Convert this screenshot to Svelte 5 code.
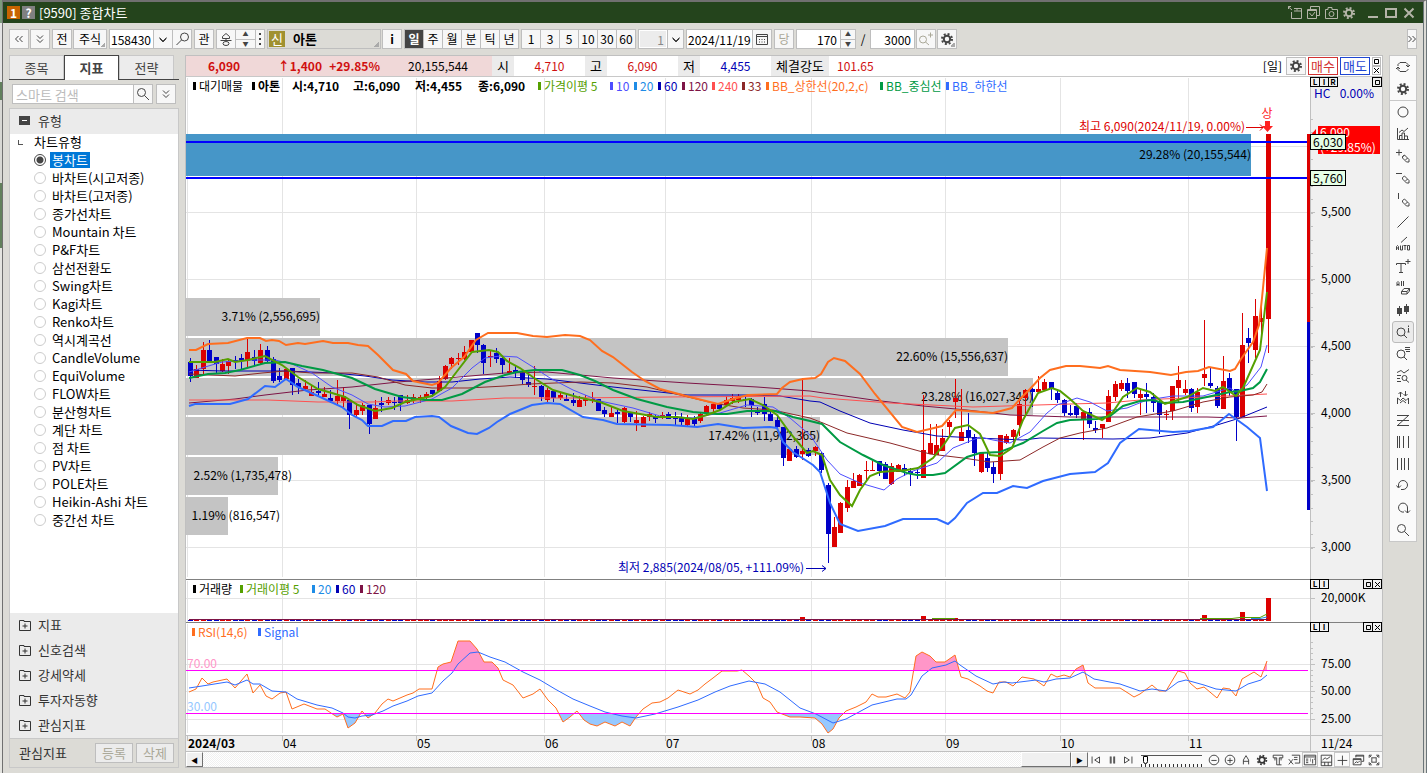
<script>
    let chartType = $state("봉차트");
    let period = $state("일");
    let keyword = $state("");
    let zoom = $state(4);

    const chartTypes = [
        "봉차트", "바차트(시고저종)", "바차트(고저종)", "종가선차트", "Mountain 차트",
        "P&F차트", "삼선전환도", "Swing차트", "Kagi차트", "Renko차트", "역시계곡선",
        "CandleVolume", "EquiVolume", "FLOW차트", "분산형차트", "계단 차트", "점 차트",
        "PV차트", "POLE차트", "Heikin-Ashi 차트", "중간선 차트",
    ];
    const groups = ["지표", "신호검색", "강세약세", "투자자동향", "관심지표"];
    const periods = ["일", "주", "월", "분", "틱", "년"];
    const minutes = [1, 3, 5, 10, 30, 60];

    // stroke paths on a 16x16 grid
    const icons = {
        search: "M2.5 6.5a4 4 0 1 0 8 0a4 4 0 1 0 -8 0M9.5 9.5L14 14",
        searchLeft: "M6.500 6a4 4 0 1 0 8 0a4 4 0 1 0 -8 0M7.5 9L2.500 14",
        down: "M4.500 6.500L8 10L11.500 6.500M4.500 7.500L8 11L11.500 7.500",
        dleft: "M7.500 5L4.500 8L7.500 11M11.500 5L8.500 8L11.500 11",
        dright: "M4.500 5L7.500 8L4.500 11M8.500 5L11.500 8L8.500 11",
        ddown: "M5 4.500L8 7.500L11 4.500M5 8.500L8 11.500L11 8.500",
        order: "M8 2.500L11.500 5.500V7.500H4.500V5.500ZM2.500 9.500H13.500M5 12.500a3 2 0 1 0 6 0a3 2 0 1 0 -6 0M8 7.500V9.500",
        dots: "M7.500 2V4M8.500 2V4M7.500 7V9M8.500 7V9M7.500 12V14M8.500 12V14",
        calendar: "M2.500 3.500H13.500V13.500H2.500ZM2.500 5.500H13.500M5 8.500H6M7.500 8.500H8.500M10 8.500H11M5 11H6M7.500 11H8.500M10 11H11",
        zoomPlus: "M1.500 8.500a3.500 3.500 0 1 0 7 0a3.500 3.500 0 1 0 -7 0M7.500 11L11 14M12.500 1.500V6.500M10 4H15",
        cycle: "M3 7V5.500L5 3.500H11L13 5.500V7.500M11 6L13 8L15 6M13 10V10.500L11 12.500H5L3 10.500V9M1 10L3 8L5 10",
        circle: "M3 8a5 5 0 1 0 10 0a5 5 0 1 0 -10 0",
        chart: "M2.500 2V13.500H14M4.500 13V9.500H7V7H9.500V10H12.500V13M7 9.500V13M9.500 10V13M4 6.500L7 4L9 5.500L13 2",
        plusPen: "M1 4.500H7M4 1.500V7.500M7.500 8.500L9.500 7L14 11.500V14H11.500L7.500 10ZM9.500 7L7.500 9M12.500 10L10.500 12",
        minusPen: "M1 3.500H7M7.500 7.500L9.500 6L14 10.500V13H11.500L7.500 9ZM12.500 9L10.500 11",
        barPen: "M3.500 1V7M7.500 8.500L9.500 7L14 11.500V14H11.500L7.500 10ZM12.500 10L10.500 12",
        line: "M2.500 13.500L13.500 2.500",
        auto: "M6 6.500L12 1M1.500 14V10.500L2.500 9.500L3.500 10.500V14M1.500 12H3.500M5.500 9.500V14H7.500V9.500M8.500 9.500H11.500M10 9.500V14M12.500 9.500H14.500V14H12.500Z",
        text: "M1.500 7V5.500H10.500V7M6 5.500V14M4 14.500H8M13 1V6M10.500 3.500H15.500",
        eraser: "M2 6V2.500L3 1.500L4 2.500V6M2 4.500H4M6.500 1V6M8.500 1V6M6.500 11.500L9 8.500H14.500V11L12 14H6.500ZM6.500 11.500H12L14.500 8.500M12 11.500V14",
        searchInfo: "M2 8a4 4 0 1 0 8 0a4 4 0 1 0 -8 0M9 11L12 14M13.500 1.500V3M13.500 4V8M12.500 8H14.500",
        searchList: "M2 8a4 4 0 1 0 8 0a4 4 0 1 0 -8 0M9 11L12 14M10 1.500H15M10 3.500H15M11 5.500H15",
        waves: "M2 4.500L6 2.500L9 5L14 1.500M2 7.500H6M2 10.500H5M2 13.500H6M7 10a2.500 2.500 0 1 0 5 0a2.500 2.500 0 1 0 -5 0M11 12L14 14.500",
        updown: "M5.500 7V2M3.500 4L5.500 2L7.500 4M10.500 1V6M8.500 4L10.500 6L12.500 4M2.500 14V8L5.500 10.500L8 8L11 10.500L13.500 8V14M5 13L8 10.500L11 13",
        zigzag: "M2 3.500H14M2 8.500H14M2 13.500H14M13.500 3.500L2.500 13.500",
        bars: "M2.500 2V14M4.500 2V14M8.500 2V14M13.500 2V14",
        bars2: "M2.500 2V14M6.500 2V14M9.500 2V14M13.500 2V14",
        undo: "M3.500 9V7a4.500 4.500 0 1 1 4.500 4.500H6M1.500 7.500L3.500 10L6 7.500",
        redo: "M9 12a4.500 4.500 0 1 1 3.500 -4V13M10 10.500L12.500 13L15 10.500",
        first: "M3.500 4V12M12 4.500L6.500 8L12 11.500Z",
        pause: "M6 4V12M10 4V12M7 4V12M11 4V12",
        last: "M12.500 4V12M4 4.500L9.500 8L4 11.500Z",
        zoomOut: "M2.500 8a5.500 5.500 0 1 0 11 0a5.500 5.500 0 1 0 -11 0M5 8.500H11",
        zoomIn: "M2.500 8a5.500 5.500 0 1 0 11 0a5.500 5.500 0 1 0 -11 0M5 8.500H11M8 5.500V11.500",
        letter: "M5 13V8L8 3L11 8V13M5 9.500H11",
        tools: "M2.500 2.500H13.500V5.500H9.500V13.500H6.500V5.500H2.500ZM4.500 5.500V8.500M11.500 5.500V8.500M9.500 13.500H12",
        excel: "M5.500 2.500H14.500V11.500H9M8 5H12M8 7.500H12M2 7L7 13M7 7L2 13",
        table: "M1.500 2.500H14.500V13.500H1.500ZM1.500 4.500H14.500M3.500 7H6M3.500 9H6M3.500 11H6M8 7H9M8 9H9M11 7V12M12.500 7H14",
        frame: "M2.500 2.500H14.500V14.500H2.500ZM2.500 10.500H14.500M6.500 10.500V14.500M10.500 10.500V14.500M4 8L7 5.500L9 7L13 4",
        cross: "M3 8.500H14M8.500 3V14",
        windows: "M5.500 5V2.500H14.500V9.500H12M5.500 3.500H14.500M2.500 6.500H11.500V13.500H2.500ZM2.500 7.500H11.500M4 12L6 10L8 11L10 9",
        expand: "M2.500 5.500V2.500H5.500M10.500 2.500H13.500V5.500M13.500 10.500V13.500H10.500M5.500 13.500H2.500V10.500M5.500 5.500H10.500V10.500H5.500ZM3 3L5 5M13 3L11 5M3 13L5 11M13 13L11 11",
        dock: "M1 1.500L5 5M1.500 4V1.500H4M7 3.500H14.500V13.500H4.500V7M10 3.500V5.500M7 6H14",
        copies: "M5.500 4V1.500H14.500V10.500H12M2.500 4.500H11.500V13.500H2.500ZM4.500 8L7 11L10 7M2.500 5.500H11.500",
        camera: "M2.500 4.500H5V2.500H9V4.500H14.500V13.500H2.500ZM6 9a2.500 2.500 0 1 0 5 0a2.500 2.500 0 1 0 -5 0",
        folder: "M2.500 3.500H7V4.500H13.500V13.500H2.500ZM5.500 9H10.500M8 6.500V11.500",
    };
    const drawTools = [
        "circle", "chart", "plusPen", "minusPen", "barPen", "line", "auto", "text", "eraser",
        "candles", "searchInfo", "searchList", "waves", "updown", "zigzag", "bars", "bars2",
        "undo", "redo", "search",
    ];
    const footTools = ["zoomOut", "zoomIn", "letter", "gear", "tools", "excel", "table", "frame", "cross", "windows", "expand"];

    // side, high, body top, body bottom, low
    const candles = `
B358,362,376,382 R365,369,378,378 R342,350,369,375 B340,350,362,362 B357,357,364,373 R359,364,371,372 R360,361,366,374
B356,360,361,369 B354,358,361,369 R338,352,361,368 B350,357,361,366 R344,350,363,365 B346,350,361,363 B357,359,381,383
B368,376,380,382 R368,369,379,380 B368,368,385,395 B379,383,387,394 R380,386,389,390 R385,392,396,396 B382,391,393,397
R387,394,397,397 B390,398,401,403 R380,396,401,405 R387,396,401,407 B400,400,415,429 R403,410,415,418 R403,405,411,415
B405,405,424,434 R400,408,419,419 B397,403,405,412 R397,400,403,405 B397,402,403,410 B395,395,403,411 R395,400,403,404
R394,397,400,403 R395,397,399,403 R392,394,397,399 B390,390,394,397 R376,381,391,392 R365,366,379,380 R357,358,364,369
R353,358,359,365 R346,352,359,360 R340,340,352,353 B333,333,345,353 B344,345,363,374 R351,356,357,367 B348,353,359,363
B357,358,365,374 R358,371,373,373 B366,370,373,378 B369,373,380,384 B375,382,385,387 R366,386,387,395 B385,386,397,401
R388,390,400,402 B390,391,398,402 R393,395,398,400 B393,399,401,401 B393,400,403,406 R396,400,407,407 R395,399,401,406
R392,399,401,403 B399,399,411,411 B407,410,414,417 R407,413,417,417 B410,412,414,423 R407,408,422,423 B412,413,417,422
R411,420,423,431 R416,417,427,427 R412,414,417,421 B415,416,419,423 R412,415,417,419 B412,414,419,419 B412,416,419,425
B413,417,422,426 R415,418,425,426 B416,419,424,426 R413,414,421,423 R405,406,414,415 R403,404,409,412 B403,404,409,411
R396,400,405,407 R394,398,401,404 R394,398,400,403 B396,399,400,407 B398,399,405,417 B407,411,413,415 B397,404,414,421
B412,414,421,421 B415,420,427,428 B427,427,458,466 R448,449,461,461 B446,449,457,458 R378,451,454,460 B448,450,456,457
R446,447,451,456 B452,453,470,473 B483,485,534,563 R517,527,547,547 R502,503,533,533 R480,487,508,512 R473,481,488,488
R474,475,486,486 R461,470,471,482 R461,470,471,471 B461,461,471,476 B462,464,479,479 R463,466,484,485 R464,465,472,472
B464,468,470,476 B468,471,473,486 B469,472,473,479 R395,450,478,478 R424,443,454,454 R424,445,455,455 R429,438,451,451
R420,422,427,436 R379,398,402,418 R389,432,441,441 B413,430,437,443 B434,437,453,466 R452,453,472,473 B453,458,468,472
B462,467,474,483 R435,435,474,480 R434,436,443,444 R429,430,437,443 R401,404,425,436 R389,390,398,414 B388,389,392,407
R376,389,392,394 R379,382,390,391 B382,382,388,400 B391,393,400,403 B399,400,413,416 B405,413,415,416 B403,406,415,418
R411,412,420,440 B408,412,424,428 B421,428,430,433 R424,424,428,438 R390,396,422,422 R381,384,397,401 R380,383,389,391
B378,383,391,398 B382,382,394,398 R390,394,398,415 B383,394,397,413 B393,397,403,412 B400,402,415,434 R410,414,415,420
R386,386,411,420 R366,380,388,403 R380,389,393,395 B388,389,408,412 R388,392,407,413 R320,374,378,386 B368,383,386,388
B386,388,406,408 R356,381,409,409 B373,378,391,396 B389,389,417,441 R313,345,417,417 B328,338,343,363 R299,316,350,358
R307,318,322,335 R134,134,319,353`
        .trim()
        .split(/\s+/)
        .map((row, i) => {
            const [high, top, bottom, low] = row.slice(1).split(",").map(Number);
            return { x: Math.round(190 + i * 6.376), up: row[0] === "R", high, top, bottom, low };
        });

    const averages = [
        { color: "#0000b4", points: "189,370 222,371 285,371 335,373 365,376 392,380 425,382 452,382 480,379 510,377 547,379 580,383 613,387 650,391 687,395 747,395 780,396 810,401 820,402 840,411 870,423 903,430 937,436 977,438 1023,440 1040,438 1113,439 1150,438 1187,433 1217,425 1240,418 1267,407" },
        { color: "#7d1446", points: "189,403 235,399 265,395 308,390 352,387 398,382 435,379 505,373 547,372 613,378 687,383 757,387 810,391 873,400 923,406 967,410 1010,415 1070,417 1107,417 1207,417 1240,418 1267,416" },
        { color: "#ff5050", points: "189,400 268,400 318,402 372,402 398,401 452,401 505,398 573,398 667,397 810,396 823,398 890,403 973,407 1070,404 1107,403 1140,400 1207,397 1267,394" },
        { color: "#8c2828", points: "189,374 235,376 262,373 285,371 312,373 352,373 378,377 405,385 432,388 468,388 505,386 530,384 580,382 613,383 647,387 680,395 713,403 743,408 773,410 810,418 823,423 847,433 890,443 930,454 963,458 990,462 1020,460 1043,447 1060,438 1080,433 1107,428 1137,417 1173,411 1203,402 1230,397 1253,395 1262,392 1267,384" },
        { color: "#4d4dff", points: "189,372 205,367 222,362 252,360 275,360 292,364 312,373 332,387 352,395 368,404 385,407 405,406 432,399 452,388 472,368 485,358 500,356 517,357 533,367 550,378 573,390 600,401 633,408 660,416 693,418 720,413 747,405 773,407 790,418 810,435 827,460 840,474 860,483 884,490 897,479 913,471 937,463 953,448 980,437 993,440 1010,443 1030,432 1047,413 1057,405 1077,398 1090,402 1107,411 1127,408 1147,400 1173,396 1203,396 1230,388 1236,392 1247,385 1261,367 1267,345" },
        { color: "#ff6e1e", wide: true, points: "189,350 196,350 208,344 228,343 247,338 260,338 266,341 272,340 279,341 286,345 298,343 305,344 323,341 333,343 348,343 358,345 368,346 378,355 393,370 406,374 413,381 432,385 438,383 451,368 464,357 476,340 488,333 517,333 533,336 547,337 565,335 580,336 590,340 602,351 613,357 632,372 645,381 660,389 690,397 718,404 733,399 748,395 777,394 782,388 790,382 803,379 815,378 821,374 828,362 834,358 845,361 860,374 875,394 902,427 917,432 930,429 942,426 950,417 956,410 993,413 1012,408 1020,399 1030,389 1040,378 1050,370 1066,366 1080,366 1100,368 1108,366 1120,370 1150,372 1171,375 1186,372 1198,371 1209,367 1230,371 1235,369 1241,359 1253,342 1259,325 1262,298 1267,248" },
        { color: "#2f6bff", wide: true, points: "189,406 195,404 230,404 248,399 265,386 275,387 286,379 298,387 318,396 342,407 352,415 362,420 368,426 382,426 393,421 406,421 415,417 432,416 439,417 451,426 468,433 477,434 489,428 497,422 510,414 532,405 547,403 560,404 583,417 603,420 617,424 670,425 697,427 718,424 743,428 770,427 777,428 783,442 793,452 813,465 820,472 830,503 840,524 858,531 885,526 903,519 937,519 948,524 955,518 967,503 983,493 997,493 1013,486 1027,488 1043,481 1070,474 1095,472 1108,463 1120,443 1139,429 1173,432 1190,431 1213,427 1229,414 1247,427 1260,438 1267,491" },
        { color: "#009a44", wide: true, points: "189,378 208,374 225,373 240,370 265,363 285,362 302,366 323,370 352,378 375,389 402,397 425,400 442,400 462,394 485,382 505,375 517,372 535,370 562,370 580,375 595,381 613,390 637,399 667,407 693,412 717,414 727,414 747,411 775,411 793,417 810,421 822,424 840,442 863,455 883,465 907,473 917,475 933,475 945,473 967,457 980,453 1000,452 1023,443 1043,431 1057,423 1070,420 1097,419 1110,416 1123,406 1140,401 1153,400 1163,403 1183,402 1207,397 1230,392 1240,391 1253,388 1260,382 1267,369" },
        { color: "#55a000", wide: true, points: "189,362 215,362 228,359 235,362 248,360 265,356 282,365 298,377 318,389 332,393 345,397 358,405 375,411 392,408 405,402 432,396 445,387 458,370 472,352 489,350 498,352 507,361 520,368 537,380 553,390 577,397 600,402 623,411 640,414 657,417 677,417 693,419 707,415 720,410 733,402 750,399 763,405 777,415 790,433 807,453 813,451 822,455 830,480 840,495 852,506 860,490 870,476 880,472 907,470 918,468 933,458 945,443 955,428 968,425 980,434 990,455 1000,456 1012,448 1023,420 1038,393 1052,388 1060,391 1070,399 1083,411 1102,420 1113,412 1123,397 1137,388 1150,392 1165,404 1187,397 1203,388 1215,391 1223,387 1236,396 1243,388 1260,350 1267,292" },
    ];

    const rsi = "189,692 196,689 202,678 208,684 213,682 227,679 235,688 247,674 253,693 260,685 266,696 272,699 280,693 286,692 292,709 304,704 317,709 325,709 337,717 343,714 348,728 355,723 362,711 368,718 375,713 382,704 388,699 393,701 407,695 413,693 419,689 432,689 438,667 443,664 451,662 458,641 470,641 477,649 484,662 492,662 498,668 503,680 513,685 523,698 533,694 540,689 548,700 556,708 563,722 570,717 577,711 584,720 590,724 597,726 605,722 615,726 622,722 630,726 636,717 643,709 652,703 660,702 668,698 678,690 690,694 698,690 705,684 713,678 722,671 737,671 742,670 749,676 757,684 763,698 770,702 777,712 790,717 800,717 815,718 822,724 828,733 833,729 839,718 846,711 856,707 866,702 872,694 878,697 886,697 897,694 905,698 910,692 916,656 922,652 930,656 936,662 945,662 955,655 961,677 968,679 980,686 987,691 993,693 999,682 1006,682 1013,686 1022,677 1034,679 1044,686 1051,674 1057,677 1064,675 1070,677 1076,669 1083,665 1088,683 1095,688 1120,688 1128,693 1134,697 1140,694 1152,685 1159,691 1166,691 1178,671 1185,673 1190,683 1197,689 1204,687 1217,698 1223,688 1230,689 1236,696 1242,679 1254,672 1261,677 1267,661";
    const signal = "189,688 202,686 227,682 235,685 247,680 253,684 260,684 272,691 286,692 297,699 317,705 332,708 343,713 348,717 355,718 362,716 372,715 383,711 393,706 407,701 418,696 432,693 443,681 452,673 458,664 470,653 478,652 490,657 505,662 523,672 540,680 555,689 573,699 590,706 605,712 622,716 636,718 655,714 678,707 698,700 715,692 730,686 749,681 765,684 780,692 800,708 816,714 833,723 846,719 872,705 897,699 906,699 911,695 922,676 932,668 946,665 955,661 960,665 976,676 993,684 1004,682 1012,683 1036,680 1044,682 1056,679 1070,678 1083,672 1094,679 1120,684 1140,691 1152,689 1166,691 1178,682 1186,680 1204,685 1216,689 1236,691 1248,684 1261,680 1267,675";

    const months = [
        [187, "2024/03"], [282, "04"], [416, "05"], [544, "06"], [665, "07"],
        [811, "08"], [945, "09"], [1060, "10"], [1188, "11"],
    ];
    const prices = [[146, ""], [212, "5,500"], [279, "5,000"], [346, "4,500"], [413, "4,000"], [480, "3,500"], [547, "3,000"]];
    const priceTicks = Array.from({ length: 33 }, (_, i) => Math.round(119 + i * 13.4));
    const profile = [
        [298, 38, 320, "3.71% (2,556,695)", 320],
        [338, 38, 1008, "22.60% (15,556,637)", 1008],
        [378, 37, 1033, "23.28% (16,027,345)", 1033],
        [417, 38, 820, "17.42% (11,992,365)", 820],
        [457, 38, 278, "2.52% (1,735,478)", 292],
        [497, 38, 228, "1.19% (816,547)", 280],
    ];
    const priceLegend = [
        [193, "대기매물", "#000"], [252, "아톤", "#000", true], [538, "가격이평 5", "#55a000"],
        [610, "10", "#4d4dff"], [634, "20", "#1e8ce6"], [658, "60", "#0000b4"], [682, "120", "#7d1446"],
        [712, "240", "#ff5050"], [742, "33", "#8c2828"], [766, "BB_상한선(20,2,c)", "#ff6e1e"],
        [880, "BB_중심선", "#009a44"], [946, "BB_하한선", "#2f6bff"],
    ];
    const ohlc = [[292, "시:4,710"], [353, "고:6,090"], [415, "저:4,455"], [478, "종:6,090"]];
    const volumeLegend = [
        [193, "거래량", "#000"], [240, "거래이평 5", "#55a000"], [312, "20", "#1e8ce6"],
        [336, "60", "#0000b4"], [360, "120", "#7d1446"],
    ];
    const rsiLegend = [[192, "RSI(14,6)", "#ff6e1e"], [258, "Signal", "#2f6bff"]];
    const bigVolumes = { 96: 4, 115: 5, 120: 3, 159: 6, 165: 9, 169: 23 };
</script>

{#snippet icon(name)}
    <svg class="icon" viewBox="0 0 16 16" aria-hidden="true">
        {#if name === "gear"}
            <circle cx="8" cy="8" r="3.200" stroke-width="2" />
            <circle cx="8" cy="8" r="5" stroke-width="2" stroke-dasharray="1.964 1.963" />
        {:else if name === "candles"}
            <path d="M4.500 4V14M11.500 2V12" />
            <path class="solid" d="M2 6H7V12H2ZM9 4H14V10H9Z" />
        {:else}
            <path d={icons[name]} />
        {/if}
    </svg>
{/snippet}

{#snippet boxMark()}
    <svg class="mini" viewBox="0 0 7 7" aria-hidden="true"><path d="M1.500 1.500H5.500V5.500H1.500Z" /></svg>
{/snippet}

{#snippet crossMark()}
    <svg class="mini" viewBox="0 0 7 7" aria-hidden="true"><path d="M1 1L6 6M6 1L1 6" /></svg>
{/snippet}

{#snippet legend(items, y)}
    {#each items as [x, label, color, bold]}
        <rect {x} y={y - 9} width="3" height="8" fill={color} />
        <text class:bold x={x + 6} {y} fill={color}>{label}</text>
    {/each}
{/snippet}

{#snippet monthLines(top, height)}
    {#each months as [x]}
        <rect {x} y={top} width="1" {height} fill="#e4e4e4" />
    {/each}
{/snippet}

<div class="window">
    <header class="titlebar">
        <span class="badge one">1</span>
        <span class="badge help">?</span>
        <h1>[9590] 종합차트</h1>
        <div class="windowTools">
            {#each ["dock", "copies", "camera", "gear"] as name}
                <button aria-label={name}>{@render icon(name)}</button>
            {/each}
            <button class="min" aria-label="최소화"><i></i></button>
            <button class="max" aria-label="최대화"><i></i></button>
            <button class="close" aria-label="닫기">
                <svg viewBox="0 0 12 12"><path d="M1.500 1.500L10.500 10.500M10.500 1.500L1.500 10.500" /></svg>
            </button>
        </div>
    </header>

    <div class="toolbar">
        <div class="set">
            <button class="btn" aria-label="이전">{@render icon("dleft")}</button>
            <button class="btn" aria-label="펼치기">{@render icon("ddown")}</button>
        </div>
        <div class="set">
            <button class="btn">전</button>
            <button class="btn stock corner">주식</button>
        </div>
        <div class="joined">
            <input class="field code" value="158430" aria-label="종목코드" />
            <button class="btn" aria-label="최근 종목">{@render icon("down")}</button>
            <button class="btn" aria-label="종목 찾기">{@render icon("searchLeft")}</button>
        </div>
        <button class="btn">관</button>
        <div class="joined">
            <button class="btn" aria-label="순서">{@render icon("order")}</button>
            <span class="spin wide"><button aria-label="위">▲</button><button aria-label="아래">▼</button></span>
            <button class="btn slim" aria-label="더보기">{@render icon("dots")}</button>
        </div>
        <div class="set">
            <div class="name corner"><span>신</span><b>아톤</b></div>
            <button class="btn bold">i</button>
        </div>
        <div class="joined periods">
            {#each periods as p}
                <button class="btn" class:on={period === p} onclick={() => (period = p)}>{p}</button>
            {/each}
        </div>
        <div class="joined">
            {#each minutes as m}
                <button class="btn">{m}</button>
            {/each}
        </div>
        <div class="joined">
            <input class="field unit" value="1" aria-label="단위" disabled />
            <button class="btn unitDown" aria-label="단위 선택">{@render icon("down")}</button>
        </div>
        <div class="joined">
            <input class="field date" value="2024/11/19" aria-label="날짜" />
            <button class="btn" aria-label="달력">{@render icon("calendar")}</button>
        </div>
        <button class="btn dim">당</button>
        <div class="joined">
            <input class="field count" value="170" aria-label="조회 개수" />
            <span class="spin"><button aria-label="늘리기">▲</button><button aria-label="줄이기">▼</button></span>
        </div>
        <span class="slash">/</span>
        <div class="set">
            <input class="field count" value="3000" aria-label="전체 개수" />
            <button class="btn dim" aria-label="확대">{@render icon("zoomPlus")}</button>
            <button class="btn corner" aria-label="설정">{@render icon("gear")}</button>
        </div>
        <button class="btn slim more" aria-label="더보기">{@render icon("dright")}</button>
    </div>

    <main>
        <aside>
            <nav>
                <button>종목</button>
                <button class="active">지표</button>
                <button>전략</button>
            </nav>
            <div class="searchRow">
                <div class="joined">
                    <input class="field" placeholder="스마트 검색" aria-label="스마트 검색" bind:value={keyword} />
                    <button class="btn" aria-label="검색">{@render icon("search")}</button>
                </div>
                <button class="btn" aria-label="검색 옵션">{@render icon("ddown")}</button>
            </div>
            <section class="panel">
                <button class="group open"><i class="folder"></i>유형</button>
                <fieldset>
                    <legend><i class="elbow"></i>차트유형</legend>
                    {#each chartTypes as type}
                        <label>
                            <input type="radio" name="chartType" value={type} bind:group={chartType} />
                            <span>{type}</span>
                        </label>
                    {/each}
                </fieldset>
                <div class="groups">
                    {#each groups as group}
                        <button class="group">{@render icon("folder")}{group}</button>
                    {/each}
                </div>
                <footer>
                    <span>관심지표</span>
                    <button class="btn dim">등록</button>
                    <button class="btn dim">삭제</button>
                </footer>
            </section>
        </aside>

        <article>
            <div class="quote">
                <div class="pink">
                    <b class="last">6,090</b>
                    <b class="diff">↑1,400</b>
                    <b class="rate">+29.85%</b>
                    <span class="volume">20,155,544</span>
                </div>
                <span class="tag">시</span><span class="value up">4,710</span>
                <span class="tag">고</span><span class="value up">6,090</span>
                <span class="tag">저</span><span class="value down">4,455</span>
                <span class="tag strength">체결강도</span><span class="value up left">101.65</span>
                <div class="orders">
                    <span>[일]</span>
                    <button class="btn" aria-label="차트 설정">{@render icon("gear")}</button>
                    <button class="trade buy">매수</button>
                    <button class="trade sell">매도</button>
                    <div class="tiny">
                        <button aria-label="확장">{@render boxMark()}</button>
                        <button aria-label="닫기">{@render crossMark()}</button>
                    </div>
                </div>
            </div>

            <div class="pane">
                <svg viewBox="186 77 1196 502" role="img" aria-label="가격 차트">
                    {#each prices as [y]}
                        <rect x="186" {y} width="1124" height="1" fill="#e4e4e4" />
                    {/each}
                    {@render monthLines(78, 499)}
                    <rect x="186" y="134" width="1065" height="42" fill="#4696c8" />
                    {#each profile as [y, height, right]}
                        <rect x="186" {y} width={right - 186} {height} fill="#c4c4c4" />
                    {/each}
                    {#each profile as [y, , , label, end]}
                        <text x={end} y={y + 23} text-anchor="end">{label}</text>
                    {/each}
                    <text x="1251" y="159" text-anchor="end">29.28% (20,155,544)</text>
                    {#each candles as c, i}
                        <rect x={c.x} y={c.high} width="1" height={c.low - c.high} fill={c.up ? "#dc0000" : "#0000c8"} />
                        <rect x={c.x - 2} y={c.top} width="5" height={c.bottom - c.top} fill={c.up ? "#dc0000" : "#0000c8"} />
                    {/each}
                    {#each averages as line}
                        <polyline class:wide={line.wide} stroke={line.color} points={line.points} />
                    {/each}
                    <rect x="186" y="141" width="1124" height="2" fill="#00f" />
                    <rect x="186" y="177" width="1124" height="2" fill="#00f" />
                    {@render legend(priceLegend, 91)}
                    {#each ohlc as [x, label]}
                        <text class="bold" {x} y="91">{label}</text>
                    {/each}
                    <text x="1245" y="131" text-anchor="end" fill="#dc0000">최고 6,090(2024/11/19, 0.00%)</text>
                    <path class="mark up" d="M1246 127.500H1263M1260 124.500L1263 127.500L1260 130.500" />
                    <text x="1267" y="118" text-anchor="middle" fill="#f22">상</text>
                    <path fill="#f22" d="M1265 121H1270V126H1273L1267.500 132L1262 126H1265Z" />
                    <text x="804" y="572" text-anchor="end" fill="#0000b4">최저 2,885(2024/08/05, +111.09%)</text>
                    <path class="mark down" d="M806 568.500H826M822 565.500L826 568.500L822 571.500" />

                    <rect x="1310" y="77" width="72" height="502" fill="#f0f0f0" />
                    <rect x="1310" y="77" width="1" height="502" fill="#c0c0c0" />
                    <rect x="1307" y="134" width="3" height="188" fill="#dc0000" />
                    <rect x="1307" y="322" width="3" height="188" fill="#0000c8" />
                    {#each priceTicks as y}
                        <rect x="1311" {y} width="2" height="1" fill="#c0c0c0" />
                    {/each}
                    {#each prices as [y, label]}
                        <rect x="1311" {y} width="4" height="1" fill="#c0c0c0" />
                        <text x="1321" y={y + 4}>{label}</text>
                    {/each}
                    <text x="1314" y="98" fill="#0000b4">HC</text>
                    <text x="1374" y="98" text-anchor="end" fill="#0000b4">0.00%</text>
                    <path fill="red" d="M1318 126H1380V154H1318ZM1316 129V136H1310Z" />
                    <text x="1320" y="137" fill="#fff">6,090</text>
                    <text x="1320" y="152" fill="#fff">(+29.85%)</text>
                    <rect class="level" x="1310.500" y="134.500" width="35" height="15" />
                    <text x="1313" y="147">6,030</text>
                    <rect class="level" x="1310.500" y="170.500" width="35" height="15" />
                    <text x="1313" y="183">5,760</text>
                </svg>
                <div class="scale">
                    <button>L</button><button>I</button><button>R</button>
                    <button class="end" aria-label="확장">{@render boxMark()}</button>
                </div>
            </div>

            <div class="pane">
                <svg viewBox="186 579 1196 43" role="img" aria-label="거래량">
                    <rect x="186" y="598" width="1124" height="1" fill="#e4e4e4" />
                    {@render monthLines(581, 41)}
                    {#each candles as c, i}
                        {@const h = bigVolumes[i] ?? 1}
                        <rect x={c.x - 2} y={621 - h} width="5" height={h} fill={c.up ? "#dc0000" : "#0000c8"} />
                    {/each}
                    <polyline stroke="#7d1446" points="189,619.500 1268,619.500" />
                    <polyline stroke="#1e8ce6" points="1251,618.500 1260,618.500 1267,617" />
                    <polyline stroke="#55a000" points="932,618.500 955,618.500" />
                    <polyline stroke="#55a000" points="1200,618.500 1232,618.500 1240,617.500 1260,617.500 1267,614" />
                    {@render legend(volumeLegend, 594)}
                    <rect x="1310" y="579" width="72" height="43" fill="#f0f0f0" />
                    <rect x="1310" y="579" width="1" height="43" fill="#c0c0c0" />
                    <rect x="1311" y="598" width="4" height="1" fill="#c0c0c0" />
                    <text x="1321" y="602">20,000K</text>
                    <rect x="186" y="579" width="1196" height="1" fill="#808080" />
                </svg>
                <div class="scale">
                    <button>L</button><button>I</button>
                    <button class="end" aria-label="확장">{@render boxMark()}</button>
                    <button aria-label="닫기">{@render crossMark()}</button>
                </div>
            </div>

            <div class="pane">
                <svg viewBox="186 622 1196 113" role="img" aria-label="RSI">
                    <defs>
                        <clipPath id="over"><rect x="186" y="622" width="1124" height="48" /></clipPath>
                        <clipPath id="under"><rect x="186" y="714" width="1124" height="21" /></clipPath>
                    </defs>
                    {#each [664, 691, 719] as y}
                        <rect x="186" {y} width="1124" height="1" fill="#e4e4e4" />
                    {/each}
                    {@render monthLines(624, 109)}
                    <polygon fill="#ff96c8" clip-path="url(#over)" points="189,735 {rsi} 1267,735" />
                    <polygon fill="#96c8ff" clip-path="url(#under)" points="189,640 {rsi} 1267,640" />
                    <polyline stroke="#ff6e1e" points={rsi} />
                    <polyline stroke="#2f6bff" points={signal} />
                    <text x="187" y="668" fill="#ff96c8">70.00</text>
                    <text x="187" y="711" fill="#96c8ff">30.00</text>
                    <rect x="186" y="670" width="1122" height="1" fill="#f0f" />
                    <rect x="186" y="713" width="1122" height="1" fill="#f0f" />
                    {@render legend(rsiLegend, 637)}
                    <rect x="1310" y="622" width="72" height="113" fill="#f0f0f0" />
                    <rect x="1310" y="622" width="1" height="113" fill="#c0c0c0" />
                    {#each [642, 648, 653, 659, 670, 675, 681, 686, 697, 702, 708, 713] as y}
                        <rect x="1311" {y} width="2" height="1" fill="#c0c0c0" />
                    {/each}
                    {#each [[664, "75.00"], [691, "50.00"], [719, "25.00"]] as [y, label]}
                        <rect x="1311" {y} width="4" height="1" fill="#c0c0c0" />
                        <text x="1321" y={y + 4}>{label}</text>
                    {/each}
                    <rect x="186" y="622" width="1196" height="1" fill="#808080" />
                </svg>
                <div class="scale">
                    <button>L</button><button>I</button>
                    <button class="end" aria-label="확장">{@render boxMark()}</button>
                    <button aria-label="닫기">{@render crossMark()}</button>
                </div>
            </div>

            <svg class="dates" viewBox="186 735 1196 17" role="img" aria-label="날짜 축">
                <rect x="186" y="735" width="1196" height="17" fill="#f0f0f0" />
                <path stroke="#c0c0c0" d="M186 735.500H1382M1310.500 735V752M186 751.500H1382" />
                {#each months as [x, label], i}
                    <rect {x} y="736" width="1" height="5" fill="#c0c0c0" />
                    <text class:bold={i === 0} x={x + 1} y="748">{label}</text>
                {/each}
                <text x="1321" y="748">11/24</text>
            </svg>

            <div class="bottom">
                <button class="arrow" aria-label="왼쪽">◀</button>
                <div class="track"><div class="thumb"></div></div>
                <button class="arrow" aria-label="오른쪽">▶</button>
                <div class="play">
                    {#each ["first", "pause", "last"] as name}
                        <button aria-label={name}>{@render icon(name)}</button>
                    {/each}
                </div>
                <input type="range" min="0" max="100" bind:value={zoom} aria-label="봉 간격" />
                <div class="play foot">
                    {#each footTools as name}
                        <button class:boxed={name === "table" || name === "cross"} aria-label={name}>{@render icon(name)}</button>
                    {/each}
                </div>
            </div>
        </article>

        <div class="tools">
            <button aria-label="새로고침">{@render icon("cycle")}</button>
            <button aria-label="설정">{@render icon("gear")}</button>
            <hr />
            {#each drawTools as name}
                <button class:on={name === "searchInfo"} aria-label={name}>{@render icon(name)}</button>
            {/each}
        </div>
    </main>
</div>

<style>
    :global(body) {
        background: linear-gradient(#7d9b7d 0 23px, #e4e4e4 23px 82px, #62805c 82px 100px, #d8d8d4 100px 183px, #62805c 183px 248px, #e4e4e0 248px);
    }
    .window, .window * {
        box-sizing: border-box;
    }
    .window {
        display: flex;
        flex-direction: column;
        min-height: 100vh;
        margin-left: 2px;
        border-top: 2px solid #707070;
        border-left: 1px solid #707070;
        border-right: 4px double #6c767a;
        background: #dcdbd6;
        color: #000;
        font: 12px/16px "Noto Sans CJK KR", sans-serif;
    }
    button, input {
        margin: 0;
        padding: 0;
        font: inherit;
        color: inherit;
    }
    button {
        display: flex;
        align-items: center;
        justify-content: center;
        border: 0;
        background: none;
    }
    .icon {
        display: block;
        flex: none;
        width: 16px;
        height: 16px;
        fill: none;
        stroke: currentColor;
    }
    .icon .solid {
        fill: currentColor;
        stroke: none;
    }
    .mini {
        display: block;
        flex: none;
        width: 7px;
        height: 7px;
        fill: none;
        stroke: currentColor;
    }

    .titlebar {
        display: flex;
        align-items: center;
        gap: 2px;
        height: 21px;
        padding: 0 6px 0 4px;
        background: #24441c;
        color: #fff;
    }
    h1 {
        margin: 0 0 0 2px;
        font-size: 13px;
        line-height: 20px;
        font-weight: 400;
    }
    .badge {
        width: 13px;
        height: 13px;
        background: #c86400;
        font-weight: 700;
        line-height: 13px;
        text-align: center;
    }
    .badge.help {
        background: #808080;
    }
    .windowTools {
        display: flex;
        align-items: center;
        gap: 2px;
        margin-left: auto;
        color: #b4b4a8;
    }
    .min, .max, .close {
        width: 16px;
        height: 16px;
    }
    .min {
        margin-left: 6px;
    }
    .min i {
        width: 10px;
        height: 10px;
        border-bottom: 2px solid;
    }
    .max i {
        width: 12px;
        height: 10px;
        border: 2px solid;
    }
    .close svg {
        width: 12px;
        height: 12px;
        stroke: currentColor;
        stroke-width: 2;
    }

    .toolbar {
        display: flex;
        align-items: center;
        gap: 2px;
        height: 32px;
        padding: 0 6px;
    }
    .set {
        display: flex;
        gap: 1px;
    }
    .joined {
        display: flex;
    }
    .joined > * + * {
        margin-left: -1px;
    }
    .btn {
        width: 20px;
        height: 20px;
        flex: none;
        border: 1px solid #bebebe;
        background: #f7f7f7;
    }
    .btn .icon {
        color: #444;
    }
    .bold {
        font-weight: 700;
    }
    .stock {
        width: 34px;
    }
    .slim {
        width: 10px;
        overflow: hidden;
    }
    .dim, .dim .icon {
        color: #aaa898;
    }
    .corner {
        background-image: linear-gradient(135deg, transparent 50%, #aaa 50%);
        background-size: 5px 5px;
        background-position: right 1px bottom 1px;
        background-repeat: no-repeat;
    }
    .more {
        margin-left: auto;
    }
    .field {
        height: 20px;
        padding: 0 3px;
        border: 1px solid #bebebe;
        background: #fff;
        outline: 0;
    }
    .code {
        width: 45px;
        padding: 0 1px;
    }
    .unit {
        width: 30px;
        background: #ececec;
        box-shadow: inset 0 0 0 1px #fff;
        color: #888;
        text-align: right;
    }
    .unitDown {
        width: 17px;
    }
    .date {
        width: 67px;
        padding: 0 1px;
    }
    .count {
        width: 45px;
        text-align: right;
    }
    .slash {
        width: 10px;
        text-align: center;
    }
    .spin {
        display: flex;
        flex-direction: column;
        width: 16px;
        height: 20px;
        border: 1px solid #bebebe;
        background: #f7f7f7;
    }
    .spin.wide {
        width: 21px;
    }
    .spin button {
        flex: 1;
        font-size: 6px;
        line-height: 8px;
        color: #444;
    }
    .spin button:first-child {
        border-bottom: 1px solid #bebebe;
    }
    .name {
        display: flex;
        align-items: center;
        gap: 8px;
        width: 114px;
        height: 20px;
        padding-left: 1px;
        border: 1px solid #bebebe;
        background-color: #dcdbd6;
        font-size: 13px;
    }
    .name span {
        width: 16px;
        background: #a09130;
        color: #fff;
        text-align: center;
    }
    .periods .btn.on {
        background: #444;
        color: #fff;
        font-weight: 700;
    }

    main {
        display: flex;
        gap: 6px;
        padding: 0 6px 5px;
    }
    aside {
        display: flex;
        flex-direction: column;
        flex: none;
        width: 170px;
        font-size: 13px;
    }
    nav {
        display: flex;
        border-bottom: 1px solid #444;
    }
    nav button {
        flex: 1;
        height: 24px;
        border: 1px solid #c8c8c8;
        border-bottom: 0;
        background: #ececec;
        color: #444;
    }
    nav::after {
        content: "";
        width: 5px;
    }
    nav .active {
        height: 25px;
        margin-bottom: -1px;
        border-color: #444;
        background: #fff;
        font-weight: 700;
    }
    .searchRow {
        display: flex;
        gap: 3px;
        padding: 4px 3px;
    }
    .searchRow .field {
        width: 122px;
    }
    .field::placeholder {
        color: #bbb;
        opacity: 1;
    }
    .panel {
        display: flex;
        flex-direction: column;
        flex: 1;
        border: 1px solid #c8c8c8;
        background: #fff;
    }
    .group {
        justify-content: flex-start;
        gap: 5px;
        width: 100%;
        height: 25px;
        padding: 0 0 2px 7px;
        background: #ebebeb;
        color: #333;
    }
    .folder {
        width: 11px;
        height: 9px;
        margin: 0 3px 0 2px;
        border: solid #444;
        border-width: 4px 3px;
        background: #fff;
    }
    fieldset {
        flex: 1;
        min-width: 0;
        margin: 0;
        padding: 0;
        border: 0;
    }
    legend, fieldset label {
        display: flex;
        align-items: center;
        height: 18px;
        padding: 0 0 2px;
        line-height: 16px;
    }
    .elbow {
        width: 5px;
        height: 5px;
        margin: 0 11px 0 8px;
        border: solid #555;
        border-width: 0 0 1px 1px;
    }
    fieldset label {
        padding-left: 24px;
    }
    fieldset span {
        margin-left: 4px;
        padding: 0 2px;
    }
    input[type="radio"] {
        appearance: none;
        width: 12px;
        height: 12px;
        border: 1px solid #ccc;
        border-radius: 50%;
    }
    input[type="radio"]:checked {
        border-color: #444;
        background: radial-gradient(#444 0 3px, #fff 4px);
    }
    input[type="radio"]:checked + span {
        background: #0078d7;
        color: #fff;
    }
    footer {
        display: flex;
        align-items: center;
        gap: 3px;
        height: 29px;
        padding: 0 4px 0 9px;
        border-top: 1px solid #c8c8c8;
        background: #dcdbd6;
        color: #333;
    }
    footer span {
        flex: 1;
    }
    footer .btn {
        width: 38px;
        background: #ececec;
    }

    article {
        flex: 1;
        min-width: 0;
        border: 1px solid #c0c0c0;
        background: #fff;
    }
    .quote {
        display: flex;
        height: 21px;
        border-bottom: 1px solid #c8c8c8;
        line-height: 20px;
    }
    .pink {
        display: flex;
        width: 306px;
        background: #f0d8d8;
        color: #d01010;
    }
    .pink .last {
        width: 76px;
        text-align: center;
    }
    .pink .diff {
        width: 60px;
        text-align: right;
    }
    .pink .rate {
        width: 58px;
        text-align: right;
    }
    .pink .volume {
        width: 88px;
        color: #000;
        text-align: right;
    }
    .tag {
        width: 22px;
        background: #ebebeb;
        font-size: 13px;
        text-align: center;
    }
    .tag.strength {
        width: 58px;
    }
    .value {
        width: 71px;
        text-align: center;
    }
    .value.left {
        padding-left: 8px;
        text-align: left;
    }
    .up {
        color: #d01010;
    }
    .down {
        color: #0000b4;
    }
    .orders {
        display: flex;
        align-items: center;
        gap: 2px;
        margin-left: auto;
        padding-right: 1px;
    }
    .orders .btn, .trade {
        height: 18px;
    }
    .orders .btn {
        margin-left: 2px;
    }
    .trade {
        width: 30px;
        border: 1px solid #d23232;
        color: #d23232;
        font-size: 13px;
    }
    .trade.sell {
        border-color: #1e46d2;
        color: #1e46d2;
    }
    .tiny button {
        width: 9px;
        height: 9px;
        border: 1px solid #bbb;
    }
    .pane {
        position: relative;
    }
    .pane > svg, .dates {
        display: block;
        width: 100%;
        height: auto;
    }
    polyline {
        fill: none;
        stroke-width: 1;
    }
    polyline.wide {
        stroke-width: 2;
    }
    .mark {
        fill: none;
        stroke: #dc0000;
    }
    .mark.down {
        stroke: #0000b4;
    }
    .level {
        fill: #e6ffe6;
        stroke: #000;
    }
    .scale {
        position: absolute;
        top: 0;
        right: 0;
        display: flex;
        width: 72px;
    }
    .scale button {
        width: 10px;
        height: 10px;
        margin-right: -1px;
        border: 1px solid #000;
        background: #f0f0f0;
        font-size: 8px;
        font-weight: 700;
        line-height: 8px;
    }
    .scale .end {
        margin-left: auto;
    }
    .scale button:last-child {
        margin-right: 0;
    }
    .bottom {
        display: flex;
        height: 15px;
        background: #fafafa;
    }
    .arrow, .thumb {
        border: 1px solid #fff;
        border-right-color: #707070;
        border-bottom-color: #707070;
        background: #f0f0f0;
    }
    .arrow {
        width: 17px;
        font-size: 7px;
    }
    .track {
        display: flex;
        flex: 1;
        justify-content: flex-end;
        background: repeating-conic-gradient(#f0f0f0 0 25%, #fff 0 50%) 0 0 / 2px 2px;
    }
    .thumb {
        width: 50px;
    }
    .play {
        display: flex;
        align-items: center;
        color: #333;
    }
    .play button {
        width: 16px;
        height: 15px;
        overflow: hidden;
    }
    .play .icon {
        width: 14px;
        height: 14px;
    }
    .play.foot {
        padding-left: 4px;
    }
    .boxed {
        box-shadow: inset 0 0 0 1px #c8c8c8;
    }
    input[type="range"] {
        appearance: none;
        width: 61px;
        height: 15px;
        margin-left: 5px;
        background:
            linear-gradient(#555, #555) 0 3px / 100% 1px no-repeat,
            repeating-linear-gradient(90deg, #333 0 1px, transparent 1px 4px) 0 100% / 100% 3px no-repeat;
    }
    input[type="range"]::-webkit-slider-thumb {
        appearance: none;
        width: 5px;
        height: 8px;
        border: 1px solid #000;
        border-radius: 0 0 3px 3px;
        background: #fff;
    }

    .tools {
        display: flex;
        flex-direction: column;
        align-items: center;
        flex: none;
        align-self: flex-start;
        width: 28px;
        border: 1px solid #c8c8c8;
        background: #fafafa;
        color: #444;
    }
    .tools button {
        width: 22px;
        height: 22px;
    }
    .tools .on {
        border: 1px solid #bbb;
        border-radius: 3px;
        background: #ebebeb;
    }
    hr {
        width: 100%;
        margin: 0;
        border: 0;
        border-top: 1px solid #c8c8c8;
    }
</style>
